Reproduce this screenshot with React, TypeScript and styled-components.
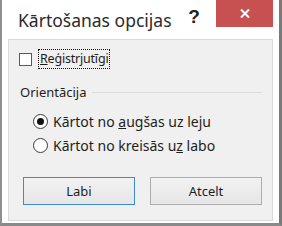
import React, { useState } from 'react';
import styled, { createGlobalStyle } from 'styled-components';

const GlobalStyle = createGlobalStyle`
  html, body {
    margin: 0;
    padding: 0;
    background: #fff;
  }
  body {
    font-family: 'Noto Sans', 'Liberation Sans', sans-serif;
  }
`;

const Window = styled.div`
  width: 282px;
  height: 226px;
  box-sizing: border-box;
  background: #fff;
  border-left: 2px solid #8f8f8f;
  border-right: 3px solid #7a7a7a;
  border-bottom: 3px solid #8a8a8a;
  display: flex;
  flex-direction: column;
  padding: 0 6px 2px 6px;
`;

const TitleBar = styled.div`
  height: 39px;
  display: flex;
  align-items: flex-start;
  flex-shrink: 0;
`;

const Title = styled.div`
  flex: 1;
  padding: 8px 0 0 10px;
  font-size: 17.5px;
  color: #2b2b2b;
  white-space: nowrap;
`;

const HelpButton = styled.div`
  width: 22px;
  padding-top: 6px;
  margin-right: 11px;
  text-align: center;
  font-family: 'Liberation Sans', sans-serif;
  font-weight: bold;
  font-size: 19px;
  color: #222;
`;

const CloseButton = styled.div`
  width: 57px;
  height: 27px;
  background: #c75050;
  color: #fff;
  display: flex;
  align-items: center;
  justify-content: center;
  svg {
    display: block;
  }
`;

const Panel = styled.div`
  flex: 1;
  background: #f0f0f0;
  border: 1px solid #dadada;
  display: flex;
  flex-direction: column;
  font-size: 13px;
  color: #1e1e1e;
`;

const CheckRow = styled.label`
  display: flex;
  align-items: center;
  padding: 9px 0 0 10px;
  height: 20px;
  cursor: default;
`;

const CheckBox = styled.span<{ $checked: boolean }>`
  width: 13px;
  height: 13px;
  box-sizing: border-box;
  border: 1px solid #5a5a5a;
  background: #fff;
  margin-right: 6px;
  display: flex;
  align-items: center;
  justify-content: center;
  font-size: 10px;
  line-height: 1;
`;

const FocusLabel = styled.span`
  border: 1px dotted #111;
  padding: 0 1px 1px 1px;
  height: 20px;
  box-sizing: border-box;
  display: flex;
  align-items: center;
  font-size: 12.5px;
  letter-spacing: -0.2px;
`;

const GroupHeader = styled.div`
  display: flex;
  align-items: center;
  margin: 14px 10px 0 11px;
  gap: 6px;
  &::after {
    content: '';
    flex: 1;
    height: 1px;
    background: #dcdcdc;
  }
`;

const RadioList = styled.div`
  display: flex;
  flex-direction: column;
  gap: 8px;
  padding: 12px 0 0 24px;
`;

const RadioRow = styled.label`
  display: flex;
  align-items: center;
  height: 16px;
  cursor: default;
  font-size: 14px;
`;

const RadioCircle = styled.span<{ $checked: boolean }>`
  width: 15px;
  height: 15px;
  box-sizing: border-box;
  border-radius: 50%;
  border: 1px solid #3a3a3a;
  background: #fff;
  margin-right: 5px;
  display: flex;
  align-items: center;
  justify-content: center;
  &::after {
    content: '';
    width: 7px;
    height: 7px;
    border-radius: 50%;
    background: ${(p) => (p.$checked ? '#111' : 'transparent')};
  }
`;

const ButtonRow = styled.div`
  display: flex;
  gap: 15px;
  margin-top: auto;
  padding: 0 10px 15px 14px;
`;

const Button = styled.button<{ $default?: boolean }>`
  width: 112px;
  height: 28px;
  box-sizing: border-box;
  border: 1px solid ${(p) => (p.$default ? '#3c8bd4' : '#adadad')};
  background: linear-gradient(#f2f2f2, #e6e6e6);
  font-family: inherit;
  font-size: 13px;
  color: #1e1e1e;
  padding: 0;
`;

function App() {
  const [caseSensitive, setCaseSensitive] = useState(false);
  const [orientation, setOrientation] = useState<'rows' | 'cols'>('rows');

  return (
    <>
      <GlobalStyle />
      <Window>
        <TitleBar>
          <Title>Kārtošanas opcijas</Title>
          <HelpButton>?</HelpButton>
          <CloseButton>
            <svg width="10" height="9" viewBox="0 0 10 9">
              <path d="M1 0.5 L9 8.5 M9 0.5 L1 8.5" stroke="#fff" strokeWidth="2" />
            </svg>
          </CloseButton>
        </TitleBar>
        <Panel>
          <CheckRow onClick={() => setCaseSensitive(!caseSensitive)}>
            <CheckBox $checked={caseSensitive}>{caseSensitive ? '✓' : ''}</CheckBox>
            <FocusLabel>
              <u>R</u>eģistrjutīgi
            </FocusLabel>
          </CheckRow>
          <GroupHeader>Orientācija</GroupHeader>
          <RadioList>
            <RadioRow onClick={() => setOrientation('rows')}>
              <RadioCircle $checked={orientation === 'rows'} />
              <span>
                Kārtot no <u>a</u>ugšas uz leju
              </span>
            </RadioRow>
            <RadioRow onClick={() => setOrientation('cols')}>
              <RadioCircle $checked={orientation === 'cols'} />
              <span>
                Kārtot no kreisās u<u>z</u> labo
              </span>
            </RadioRow>
          </RadioList>
          <ButtonRow>
            <Button $default>Labi</Button>
            <Button>Atcelt</Button>
          </ButtonRow>
        </Panel>
      </Window>
    </>
  );
}

export default App;
